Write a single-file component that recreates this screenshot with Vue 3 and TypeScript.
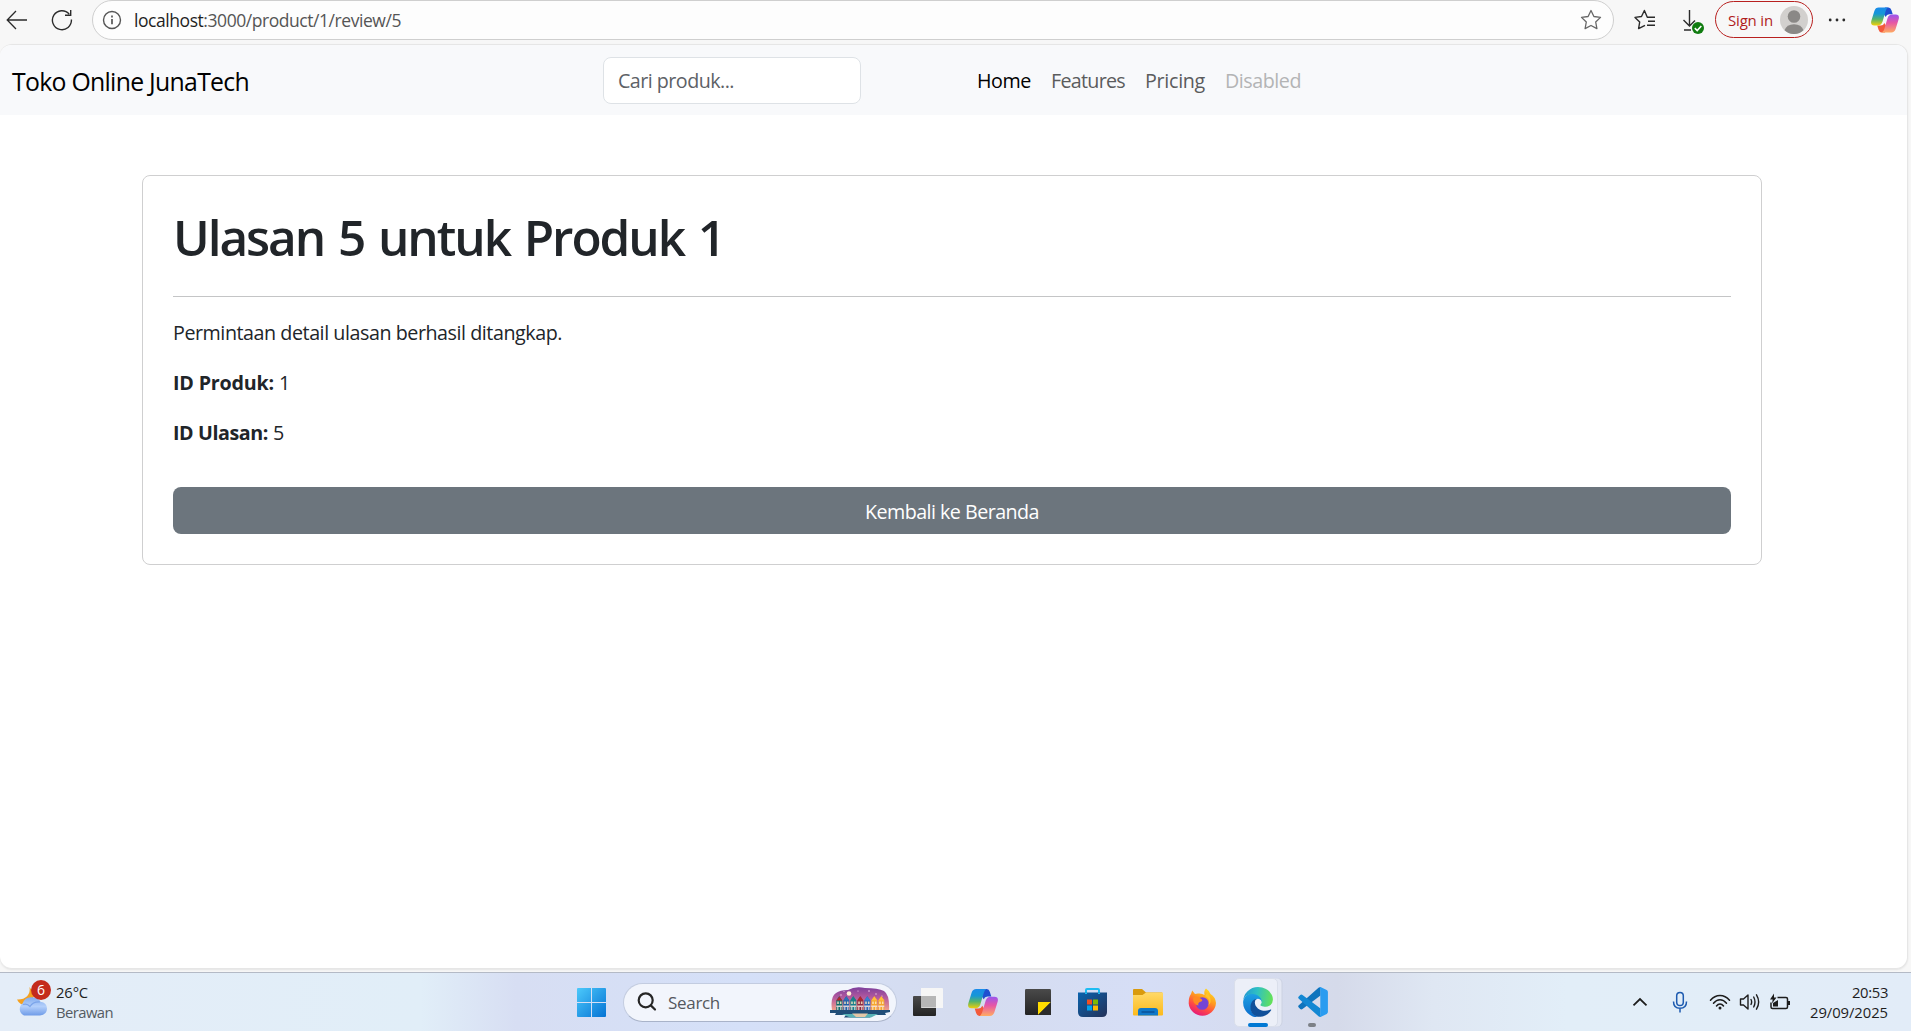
<script setup lang="ts">
interface NavLink {
  label: string
  width: number
  state: string
}

const navLinks: NavLink[] = [
  { label: 'Home', width: 54, state: 'active' },
  { label: 'Features', width: 74, state: '' },
  { label: 'Pricing', width: 60, state: '' },
  { label: 'Disabled', width: 76, state: 'disabled' },
]

const productId = '1'
const reviewId = '5'

// Tracks a text run so that it fills the given width in pixels.
const vFit = {
  mounted(el: HTMLElement, binding: { value: number }) {
    const count = (el.textContent ?? '').length
    const natural = el.getBoundingClientRect().width
    el.style.letterSpacing = `${((binding.value - natural) / count).toFixed(3)}px`
  },
}

// Roof and wall colours of the row of canal houses.
const houses = [
  ['#b3262d', '#0f6c6b'], ['#2f6fb5', '#1f5fa8'], ['#1c7f86', '#17808c'], ['#b3262d', '#8c2c44'],
  ['#3a7fd0', '#2b66b8'], ['#ffbe3d', '#f6a62a'], ['#ffbe3d', '#f6a62a'],
]
</script>

<template>
  <div class="screen">
    <svg class="defs" width="0" height="0">
      <defs>
        <linearGradient id="cpA" x1="0" y1="0" x2="0" y2="1">
          <stop offset="0" stop-color="#1a8bea" /><stop offset=".35" stop-color="#1597d6" />
          <stop offset=".65" stop-color="#55b46b" /><stop offset="1" stop-color="#f2cf08" />
        </linearGradient>
        <linearGradient id="cpB" x1="0" y1="0" x2="0" y2="1">
          <stop offset="0" stop-color="#9a55ee" /><stop offset=".45" stop-color="#e656a6" />
          <stop offset="1" stop-color="#ffab62" />
        </linearGradient>
        <linearGradient id="winG" gradientUnits="userSpaceOnUse" x1="0" y1="0" x2="29" y2="29">
          <stop offset="0" stop-color="#4cc9fb" /><stop offset="1" stop-color="#0573d4" />
        </linearGradient>
        <linearGradient id="dark" x1="0" y1="0" x2="0" y2="1">
          <stop offset="0" stop-color="#4a4a4a" /><stop offset="1" stop-color="#232323" />
        </linearGradient>
        <linearGradient id="storeG" x1="0" y1="0" x2="1" y2="1">
          <stop offset="0" stop-color="#0a63ae" /><stop offset="1" stop-color="#243158" />
        </linearGradient>
        <linearGradient id="foldG" x1="0" y1="0" x2="0" y2="1">
          <stop offset="0" stop-color="#ffd968" /><stop offset="1" stop-color="#fcb91c" />
        </linearGradient>
        <linearGradient id="fxG" x1=".8" y1="0" x2=".3" y2="1">
          <stop offset="0" stop-color="#ffe226" /><stop offset=".4" stop-color="#ff9a1f" />
          <stop offset=".7" stop-color="#ff4a45" /><stop offset="1" stop-color="#e3167e" />
        </linearGradient>
        <linearGradient id="edTop" x1="0" y1=".4" x2="1" y2=".5">
          <stop offset="0" stop-color="#2298d4" /><stop offset=".45" stop-color="#2fc0c3" />
          <stop offset="1" stop-color="#65e256" />
        </linearGradient>
        <linearGradient id="edMid" x1="0" y1="0" x2="0" y2="1">
          <stop offset="0" stop-color="#1ea2e4" /><stop offset="1" stop-color="#0b6bcb" />
        </linearGradient>
        <linearGradient id="cloudG" x1="0" y1="0" x2="0" y2="1">
          <stop offset="0" stop-color="#82acee" /><stop offset=".5" stop-color="#b3cffb" />
          <stop offset="1" stop-color="#6f9ce8" />
        </linearGradient>
        <linearGradient id="skyG" x1="0" y1="0" x2="0" y2="1">
          <stop offset="0" stop-color="#7d3f9c" /><stop offset=".45" stop-color="#b65b9e" />
          <stop offset="1" stop-color="#f5a286" />
        </linearGradient>
        <symbol id="copilot" viewBox="0 0 30 27">
          <path d="M15 .1H18.800Q21 .1 21.900 3L23.300 7.400H19.500Q16.700 7.400 15.700 10.200L13 6Z" fill="#1e4fd0" />
          <path d="M15 26.900H11.200Q9 26.900 8.100 24L6.700 19.500H10.500Q13.300 19.500 14.300 16.800L17 21Z" fill="#f35a3b" />
          <path d="M8.200 .1H18.500Q16.700 .7 15.800 3.700L12.300 15.500Q11 19.300 7.500 19.300H3.500Q-.8 19.300 .3 14.500L3.600 3.800Q4.800 .1 8.200 .1Z" fill="url(#cpA)" />
          <path d="M21.800 26.900H11.500Q13.300 26.300 14.200 23.300L17.700 11.500Q19 7.700 22.500 7.700H26.500Q30.800 7.700 29.700 12.500L26.400 23.200Q25.200 26.900 21.800 26.900Z" fill="url(#cpB)" />
        </symbol>
      </defs>
    </svg>

    <header class="toolbar">
      <svg class="back" width="22" height="20" viewBox="0 0 22 20" fill="none" stroke="#2b2b2b" stroke-width="1.300">
        <path d="M21 10H1.500M10 1 1.200 10 10 19" />
      </svg>
      <svg class="reload" width="22" height="22" viewBox="0 0 22 22" fill="none" stroke="#2b2b2b" stroke-width="1.400">
        <path d="M20.400 10.500A9.500 9.500 0 1 1 18.200 5.100M19.700 1V6.300H14" />
      </svg>
      <div class="address">
        <svg width="20" height="20" viewBox="0 0 20 20" fill="none" stroke="#555" stroke-width="1.400">
          <circle cx="10" cy="10" r="8.500" /><path d="M10 9V14.200M10 5.600V7.400" stroke-width="1.700" />
        </svg>
        <div class="url"><span v-fit="267"><b>localhost</b>:3000/product/{{ productId }}/review/{{ reviewId }}</span></div>
        <svg class="star" width="22" height="22" viewBox="0 0 22 22" fill="none" stroke="#666" stroke-width="1.300" stroke-linejoin="round">
          <path d="M11 1.500 13.900 7.500 20.500 8.400 15.700 13 16.900 19.600 11 16.500 5.100 19.600 6.300 13 1.500 8.400 8.100 7.500Z" />
        </svg>
      </div>
      <svg class="favs" width="22" height="22" viewBox="0 0 22 22" fill="none" stroke="#2b2b2b" stroke-width="1.400" stroke-linejoin="round">
        <path d="M21 8.200H13.300L10.400 1.500 7.500 7.500 1 8.400 5.700 13 4.600 19.600 11 16.300M14 12.200H21M13 16.200H21" />
      </svg>
      <svg class="download" width="24" height="26" viewBox="0 0 24 26" fill="none" stroke="#2b2b2b" stroke-width="1.400">
        <path d="M7.500 2V18M1.500 12 7.500 18 13 12.500M2 22H9" />
        <circle cx="16" cy="20" r="6" fill="#107c10" stroke="none" />
        <path d="M12.800 20.200 15.200 22.500 19.300 18" stroke="#fff" stroke-width="1.600" />
      </svg>
      <div class="signin">
        <span v-fit="45">Sign in</span>
        <svg width="28" height="28" viewBox="0 0 28 28">
          <circle cx="14" cy="14" r="14" fill="#d2d0ce" />
          <circle cx="14" cy="10.500" r="6.300" fill="#8a8886" />
          <path d="M4.500 24.300Q6.500 18.300 14 18.300T23.500 24.300A14 14 0 0 1 4.500 24.300Z" fill="#8a8886" />
        </svg>
      </div>
      <svg class="more" width="18" height="6" viewBox="0 0 18 6" fill="#2b2b2b">
        <circle cx="2.200" cy="3" r="1.400" /><circle cx="9" cy="3" r="1.400" /><circle cx="15.800" cy="3" r="1.400" />
      </svg>
      <svg class="cp" width="28" height="26"><use href="#copilot" /></svg>
    </header>

    <main class="viewport">
      <nav class="navbar">
        <div class="brand"><span v-fit="237">Toko Online JunaTech</span></div>
        <div class="search-input"><span v-fit="116">Cari produk...</span></div>
        <div class="links">
          <a v-for="link in navLinks" :key="link.label" :class="link.state"><span v-fit="link.width">{{ link.label }}</span></a>
        </div>
      </nav>
      <section class="card">
        <h1><span v-fit="551">Ulasan {{ reviewId }} untuk Produk {{ productId }}</span></h1>
        <hr />
        <p><span v-fit="389">Permintaan detail ulasan berhasil ditangkap.</span></p>
        <p><strong v-fit="101">ID Produk:</strong>&nbsp;{{ productId }}</p>
        <p><strong v-fit="95">ID Ulasan:</strong>&nbsp;{{ reviewId }}</p>
        <a class="btn"><span v-fit="174">Kembali ke Beranda</span></a>
      </section>
    </main>

    <footer class="taskbar">
      <div class="weather">
        <div class="weather-icon">
          <svg width="32" height="30" viewBox="0 0 32 30">
            <path d="M13.500 0C15 8 9 13 1 12.500Q4 19 12 18L19 8Z" fill="#f5a11f" />
            <path d="M8 28.500A7 7 0 0 1 6.500 16.500Q9 9.800 16 10.300T24.500 14.800Q31 15.800 31 21.800T24 28.500Z" fill="url(#cloudG)" />
            <path d="M7 17.500Q11 16 14 19.500 17 14.500 24 15" fill="none" stroke="#7ba4e9" stroke-width="1.200" />
          </svg>
          <span class="badge">6</span>
        </div>
        <div class="weather-text">
          <div><span v-fit="32">26°C</span></div>
          <div class="muted"><span v-fit="57">Berawan</span></div>
        </div>
      </div>

      <div class="apps">
        <svg class="win" width="29" height="29" viewBox="0 0 29 29" fill="url(#winG)">
          <path d="M1 0H14V14H0V1Q0 0 1 0ZM15 0H28Q29 0 29 1V14H15ZM0 15H14V29H1Q0 29 0 28ZM15 15H29V28Q29 29 28 29H15Z" />
        </svg>
        <div class="search">
          <svg width="20" height="20" viewBox="0 0 20 20" fill="none" stroke="#262626" stroke-width="2.200" stroke-linecap="round">
            <circle cx="8.700" cy="8.300" r="7" /><path d="M13.800 13.400 18 17.500" />
          </svg>
          <div class="search-label"><span v-fit="52">Search</span></div>
          <svg width="60" height="31" viewBox="0 0 60 31">
            <path d="M2 23Q0 10 6 6 10 3 18 3 25 -1 35 1 48 1 54 4 60 8 59 24Z" fill="url(#skyG)" />
            <circle cx="19" cy="6.500" r="2.300" fill="#fff1d6" />
            <g fill="#f7d3ef"><circle cx="11" cy="8" r=".7" /><circle cx="28" cy="4" r=".6" /><circle cx="39" cy="4" r=".8" /><circle cx="46" cy="7" r=".7" /><circle cx="14" cy="4.500" r=".5" /><circle cx="52" cy="9" r=".6" /></g>
            <path d="M0 23H60V25L55 26 56 28H42L40 30.500H14L16 28H5L6 26H0Z" fill="#214e78" />
            <path d="M12 27H48L41 30.500H20Z" fill="#58b2b6" />
            <path d="M22 26.500H38L35 30H26Z" fill="#e4c7a7" />
            <g v-for="(h, i) in houses" :key="i" :transform="`translate(${6 + i * 7} 9)`">
              <path d="M.3 4.500 3.300 0 6.300 4.500V14H.3Z" :fill="h[1]" />
              <path d="M.3 4.500 3.300 .5 6.300 4.500Z" :fill="h[0]" />
              <path d="M1.200 5.500H2.800V8H1.200ZM3.900 5.500H5.500V8H3.900Z" fill="#ffe9bf" opacity=".85" />
              <path d="M.3 9.500H6.300V11H.3ZM1.200 11H2.400V14H1.200ZM4.200 11H5.400V14H4.200Z" fill="#f8e6e0" opacity=".85" />
            </g>
          </svg>
        </div>

        <div class="app">
          <svg width="30" height="28" viewBox="0 0 30 28">
            <rect x="0" y="8" width="23" height="20" rx="1" fill="url(#dark)" />
            <path d="M8 0H29Q30 0 30 1V20H9Q8 20 8 19Z" fill="#f6f6f6" />
            <path d="M8 8H23V19.500H9Q8 19.500 8 18.500Z" fill="#b6b6b6" />
          </svg>
        </div>
        <div class="app"><svg width="30" height="27"><use href="#copilot" /></svg></div>
        <div class="app">
          <svg width="26" height="26" viewBox="0 0 26 26">
            <rect width="26" height="26" rx="1.200" fill="url(#dark)" />
            <path d="M13 13H26L13 26Z" fill="#ffdc00" /><path d="M26 13V26H13Z" fill="#2c2c2c" />
          </svg>
        </div>
        <div class="app">
          <svg width="29" height="29" viewBox="0 0 29 29">
            <path d="M8 5V2Q8 1 9 1H20Q21 1 21 2V5" fill="none" stroke="#1ebcf2" stroke-width="2" />
            <path d="M0 4.500H29V24Q29 29 24 29H5Q0 29 0 24Z" fill="url(#storeG)" />
            <path d="M9 11.500H14V16.500H9Z" fill="#f25022" /><path d="M15 11.500H20V16.500H15Z" fill="#7fba00" />
            <path d="M9 17.500H14V22.500H9Z" fill="#00a4ef" /><path d="M15 17.500H20V22.500H15Z" fill="#ffb900" />
            <path d="M8 4.500V6M21 4.500V6" stroke="#1ebcf2" stroke-width="2" />
          </svg>
        </div>
        <div class="app">
          <svg width="30" height="27" viewBox="0 0 30 27">
            <path d="M0 1Q0 0 1 0H9L13 3.500H29V9H0Z" fill="#d99a0d" />
            <path d="M0 6H9.500L13 3.500H30V25.500Q30 26.500 29 26.500H1Q0 26.500 0 25.500Z" fill="url(#foldG)" />
            <path d="M5 26.500V22Q5 19 8 19H22Q25 19 25 22V26.500Z" fill="#0f78c9" />
            <path d="M8.500 23H21.500" stroke="#0a4f94" stroke-width="1.400" />
          </svg>
        </div>
        <div class="app">
          <svg width="29" height="29" viewBox="0 0 29 29">
            <path d="M18 .5Q20.500 2 22.500 6 27.500 9 28 15A13.700 13.700 0 0 1 .7 15.500Q.5 9 3 6L4.200 2.500 7 6 10 5.500Q14 5 16.500 7 15.500 3 18 .5Z" fill="url(#fxG)" />
            <circle cx="14.300" cy="15.500" r="6.300" fill="#7544d6" />
            <path d="M5 10Q7 8 10.500 9L14 11.500Q15 13 12 14 9.500 15 10.500 17.500 5 17 5 10Z" fill="#ff8a22" />
            <path d="M17 8Q23 11 20.500 17 24 14 22 9L19.500 4.500Q18 6 17 8Z" fill="#ffc52a" />
          </svg>
        </div>
        <div class="app edge">
          <div class="tile">
            <svg width="30" height="30" viewBox="0 0 256 258">
              <path d="M105.700 246.500a79.200 79.200 0 0 1-22.700-21.300 80.700 80.700 0 0 1 29.500-120c3.100-1.500 8.400-4.100 15.500-4a32.300 32.300 0 0 1 25.700 13 31.900 31.900 0 0 1 6.300 18.600c0-.2 24.500-79.600-80-79.600-43.900 0-80 41.700-80 78.200a130 130 0 0 0 12.100 56 128 128 0 0 0 156.400 67.100 75.500 75.500 0 0 1-62.800-8z" fill="url(#edMid)" />
              <path d="M235.700 193.500a94 94 0 0 1-10.600 4.700 101.900 101.900 0 0 1-35.900 6.500c-47.300 0-88.500-32.600-88.500-74.300A31.500 31.500 0 0 1 117.100 103c-42.800 1.800-53.800 46.400-53.800 72.500 0 73.900 68.100 81.400 82.800 81.400 7.900 0 19.800-2.300 27-4.600l1.300-.4a128.300 128.300 0 0 0 66.600-52.800 4 4 0 0 0-5.300-5.600z" fill="#11509a" />
              <path d="M152.300 148.900c-.8 1-3.300 2.500-3.300 5.600 0 2.600 1.700 5.100 4.700 7.200 14.400 10 41.500 8.700 41.600 8.700a59.600 59.600 0 0 0 30.300-8.300 61.400 61.400 0 0 0 30.400-52.900c.3-22.400-8-37.300-11.300-43.900C223.500 23.800 177.700 0 128 0A128 128 0 0 0 0 126.200c.5-36.500 36.800-66 80-66 3.500 0 23.500.3 42 10 16.300 8.600 24.900 19 30.900 29.200 6.100 10.700 7.200 24.200 7.200 29.500s-2.700 13.300-7.800 20z" fill="url(#edTop)" />
            </svg>
          </div>
          <i class="mark active"></i>
        </div>
        <div class="app code">
          <svg width="30" height="30" viewBox="0 0 30 30">
            <path d="M22.500 .3V8.500L4.500 22Q3.300 22.800 2.200 21.900L.8 20.600Q-.4 19.500 .8 18.300L20.500 .8Q21.500 0 22.500 .3Z" fill="#0f74bd" />
            <path d="M22.500 29.700V21.500L4.500 8Q3.300 7.200 2.200 8.100L.8 9.400Q-.4 10.500 .8 11.700L20.500 29.200Q21.500 30 22.500 29.700Z" fill="#1287d3" />
            <path d="M20.800 .5Q21.800 -.2 23 .3L28.700 3.100Q29.900 3.800 29.900 5V25Q29.900 26.200 28.700 26.900L23 29.700Q21.800 30.200 20.800 29.500 22.300 29.500 22.300 28V2Q22.300 .5 20.800 .5Z" fill="#2a9cf0" />
          </svg>
          <i class="mark"></i>
        </div>
      </div>

      <div class="tray">
        <svg class="chev" width="16" height="10" viewBox="0 0 16 10" fill="none" stroke="#1d1d1d" stroke-width="1.800"><path d="M1.500 8.300 8 2 14.500 8.300" /></svg>
        <svg class="mic" width="16" height="22" viewBox="0 0 16 22" fill="none" stroke="#1e5bb0" stroke-width="1.500">
          <rect x="4.700" y="1.500" width="6.600" height="13" rx="3.300" /><path d="M1.500 10.500Q1.500 17.300 8 17.300T14.500 10.500M8 17.300V21.500" />
        </svg>
        <svg class="wifi" width="22" height="18" viewBox="0 0 22 18" fill="none" stroke="#1d1d1d" stroke-width="1.500" stroke-linecap="round">
          <path d="M1.500 7.300Q5.500 2.500 11 2.500T20.500 7.300M4.500 10.200Q7.300 6.700 11 6.700T17.500 10.200M7.500 13Q9 11 11 11T14.500 13" /><circle cx="11" cy="15" r="1.500" fill="#1d1d1d" stroke="none" />
        </svg>
        <svg class="vol" width="22" height="20" viewBox="0 0 22 20" fill="none" stroke="#1d1d1d" stroke-width="1.400" stroke-linejoin="round" stroke-linecap="round">
          <path d="M1.500 7V13H4.500L9 17V3L4.500 7ZM12 7.500Q13.300 10 12 12.500M14.700 5Q17.300 10 14.700 15M17.500 2.800Q21.800 10 17.500 17.200" />
        </svg>
        <svg class="bat" width="22" height="18" viewBox="0 0 22 18" fill="none" stroke="#1d1d1d" stroke-width="1.500">
          <path d="M8.500 4.500H17Q18.500 4.500 18.500 6V14Q18.500 15.500 17 15.500H3.500Q2 15.500 2 14V9.500" /><path d="M19 8H21V12H19ZM4 13.500V10L9 7V13.500ZM5 .5 1 6.500H3.700L3 10.500 7.500 4.500H5Z" fill="#1d1d1d" stroke="none" />
        </svg>
        <div class="clock">
          <div><span v-fit="36">20:53</span></div>
          <div><span v-fit="78">29/09/2025</span></div>
        </div>
      </div>
    </footer>
  </div>
</template>

<style>
body { margin: 0; overflow: hidden; }
</style>

<style scoped>
.screen { width: 1911px; height: 1031px; display: flex; flex-direction: column; background: #f7f7f7; font-family: "Open Sans", "Noto Sans", sans-serif; box-sizing: border-box; overflow: hidden; }
.screen * { box-sizing: border-box; }
.defs { position: absolute; }
svg { display: block; flex: none; }
span { display: inline-block; white-space: nowrap; }

.toolbar { height: 44px; padding-bottom: 4px; display: flex; align-items: center; flex: none; }
.back { margin-left: 6px; }
.reload { margin-left: 23px; }
.address { margin-left: 19px; width: 1522px; height: 40px; border: 1px solid #cfcfcf; border-radius: 20px; background: #fdfdfd; display: flex; align-items: center; padding: 0 11px 0 9px; }
.url { margin-left: 12px; flex: 1; font-size: 17.500px; line-height: 24px; color: #555; }
.url b { font-weight: 400; color: #1f1f1f; }
.favs { margin-left: 20px; }
.download { margin-left: 26px; position: relative; top: 1px; }
.signin { margin-left: 9px; width: 98px; height: 37px; border: 1px solid #b8201f; border-radius: 19px; display: flex; align-items: center; justify-content: space-between; padding: 0 4px 0 12px; font-size: 15px; color: #b01c1c; position: relative; top: -.5px; }
.more { margin-left: 15px; }
.cp { margin-left: 25px; }

.viewport { width: 1908px; height: 925px; flex: none; border: 1px solid #e6e6e6; border-left: 0; border-radius: 12px; background: #fff; overflow: hidden; box-shadow: 0 1px 2px #00000014; font-size: 19.700px; line-height: 30px; color: #212529; }
.navbar { height: 70px; display: flex; align-items: center; background: #f8f9fb; }
.brand { width: 603px; padding: 2px 0 0 12px; font-size: 24.800px; color: #000; }
.search-input { width: 258px; height: 47px; border: 1px solid #dee2e6; border-radius: 8px; background: #fff; padding: 8px 14px; color: #5d6166; }
.links { display: flex; gap: 20px; margin-left: 116px; padding-top: 2px; color: #5b5c5d; }
.links .active { color: #000; }
.links .disabled { color: #b3b4b5; }

.card { margin: 60px 0 0 142px; width: 1620px; height: 390px; border: 1px solid #cfcfd0; border-radius: 8px; padding: 30px; }
h1 { margin: 0; padding-top: 1px; font-size: 49.500px; line-height: 60px; font-weight: 600; word-spacing: 3px; }
hr { margin: 29px 0 21px; border: 0; border-top: 1px solid #c4c5c6; }
p { margin: 0 0 20px; display: flex; }
strong { font-weight: 700; white-space: nowrap; }
.btn { margin-top: 39px; height: 47px; padding-top: 2px; border-radius: 8px; background: #6c757d; color: #fff; display: flex; align-items: center; justify-content: center; }

.taskbar { margin-top: 3px; height: 59px; flex: none; border-top: 1px solid #b4bac6; display: flex; align-items: center; color: #1d1d1d; font-size: 14.800px; line-height: 20px;
  background: linear-gradient(90deg, #e4edf8 0, #e1eef8 22%, #d7def3 27%, #d5e0f8 39%, #d5dcef 50%, #d6def6 60%, #d5daea 70%, #dfe7f3 75%, #e2eef8 82%, #e2ecf8 100%); }
.weather { width: 577px; padding-left: 16px; display: flex; align-items: center; gap: 8px; }
.weather-icon { position: relative; top: -1px; padding-top: 2px; }
.badge { position: absolute; left: 15px; top: -5px; width: 20px; height: 20px; border-radius: 50%; background: #c42b1c; color: #fff; text-align: center; font-size: 14px; line-height: 20px; }
.muted { color: #555b62; }
.apps { width: 765px; display: flex; align-items: center; height: 100%; }
.search { margin-left: 17px; width: 274px; height: 39px; border: 1px solid #c3cce0; border-bottom-color: #a9b3c9; border-radius: 20px; background: #f2f5fc; display: flex; align-items: center; padding: 0 6px 0 13px; }
.search-label { margin-left: 11px; flex: 1; padding-top: 1px; font-size: 17px; color: #55585e; }
.search + .app { margin-left: 3px; }
.app { width: 55px; height: 100%; display: flex; align-items: center; justify-content: center; flex: none; position: relative; }
.edge { justify-content: flex-start; padding-left: 4px; }
.tile { width: 44px; height: 49px; padding-left: 4px; border-radius: 5px; background: #eceff8; border: 1px solid #dadfeb; display: flex; align-items: center; justify-content: center; box-shadow: 4px 0 0 -0.500px #e4e8f4, 5px 0 0 -0.500px #ccd2e2; }
.mark { position: absolute; bottom: 4px; left: 23px; width: 8px; height: 4px; border-radius: 2px; background: #7c8087; }
.mark.active { left: 18px; width: 20px; background: #0078d4; }
.tray { margin-left: auto; display: flex; align-items: center; padding-right: 23px; }
.mic { margin-left: 24px; }
.wifi { margin-left: 21px; }
.vol { margin-left: 8px; }
.bat { margin-left: 8px; }
.clock { width: 97px; text-align: right; }
.clock div { white-space: nowrap; }
</style>
